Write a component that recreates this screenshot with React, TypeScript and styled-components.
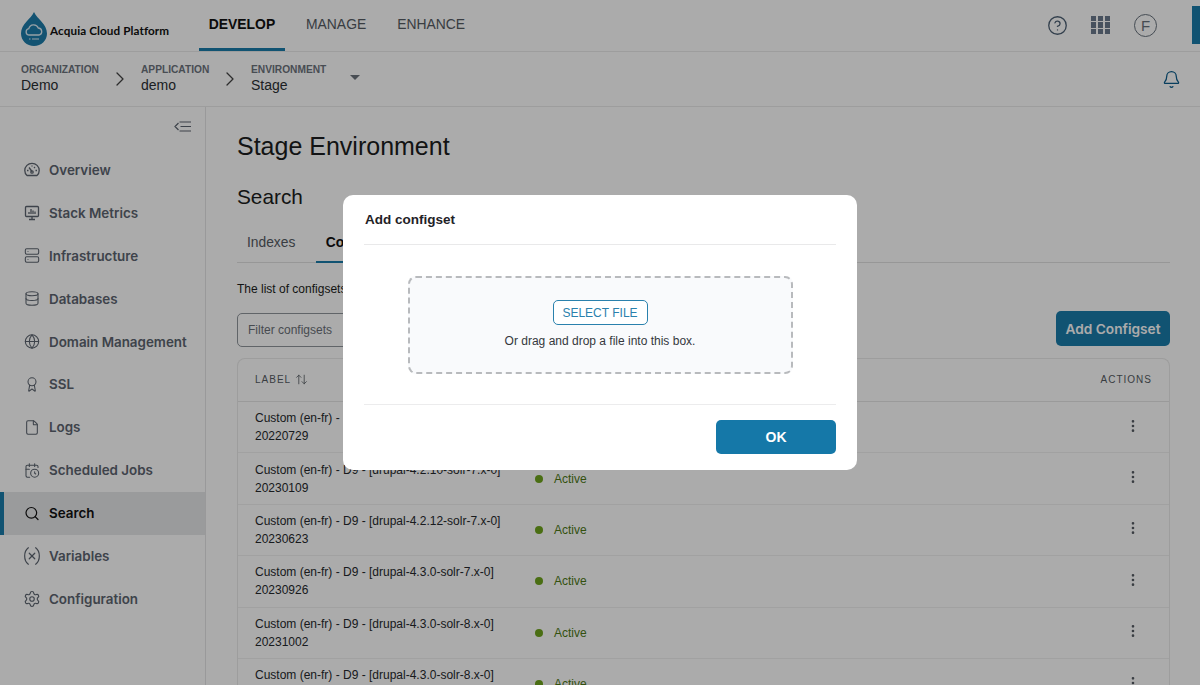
import React from "react";
import styled, { createGlobalStyle } from "styled-components";
import { Database, Globe, Award, File, CalendarClock, Search, Variable, Settings, Server, Bell, ChevronRight, CircleHelp, ArrowUpDown, EllipsisVertical } from "lucide-react";

const Global = createGlobalStyle`
  html, body { margin: 0; padding: 0; height: 685px; overflow: hidden; background: #fff; font-family: "Liberation Sans", Arial, sans-serif; }
  * { box-sizing: border-box; }
`;
const Page = styled.div`position: relative; width: 1200px; height: 685px; overflow: hidden; display: flex; flex-direction: column; background: #fff;`;
const Overlay = styled.div`position: absolute; inset: 0; background: rgba(0,0,0,.33); display: block;`;
const TopBar = styled.header`height: 52px; flex: none; display: flex; align-items: stretch; border-bottom: 1px solid #ebebeb; position: relative;`;
const Logo = styled.div`width: 199px; flex: none; display: flex; align-items: center; padding-left: 20px; gap: 2px;`;
const LogoText = styled.span`font: 700 11.7px "Lato", sans-serif; color: #111; margin-top: 8px; letter-spacing: .1px;`;
const Tabs = styled.nav`display: flex; flex: 1;`;
const Tab = styled.div<{ $active?: boolean }>`
  height: 51px; flex: none; width: ${p => p.$active ? "86px" : "auto"}; padding: 16px ${p => p.$active ? "0" : "15.5px"} 0; margin-right: ${p => p.$active ? "5.5px" : "0"};
  display: flex; align-items: flex-start; justify-content: center; font: 400 13.9px "Liberation Sans", sans-serif; line-height: 17px;
  color: ${p => p.$active ? "#111" : "#555b63"};
  font-weight: ${p => p.$active ? 700 : 400};
  border-bottom: 3px solid ${p => p.$active ? "#1a7cab" : "transparent"};
`;
const TopIcons = styled.div`display: flex; align-items: center; gap: 0; height: 50px;`;
const HelpSlot = styled.div`width: 21px; height: 21px; margin-right: 23px; color: #4d6074; display: flex;`;
const Grid = styled.div`display: grid; grid-template-columns: repeat(3, 5.4px); grid-auto-rows: 5.4px; gap: 1.4px; margin-right: 24px;`;
const GridDot = styled.span`background: #6a7a8c;`;
const Avatar = styled.div`width: 23px; height: 23px; border-radius: 50%; border: 1.5px solid #68727d; color: #68727d; font: 400 15px "Liberation Sans", sans-serif; display: flex; align-items: center; justify-content: center; margin-right: 43px;`;
const Corner = styled.div`width: 8px; height: 38px; background: #1a7cab; position: absolute; right: 0; top: 6px;`;
const Crumbs = styled.div`height: 55px; flex: none; display: flex; align-items: center; border-bottom: 1px solid #ebebeb; padding: 0 19px 0 21px;`;
const Crumb = styled.div<{ $w: number }>`width: ${p => p.$w}px; flex: none; display: flex; flex-direction: column;`;
const CrumbLabel = styled.span`font: 700 10.2px "Liberation Sans", sans-serif; line-height: 12px; color: #6c737c; margin-bottom: 1px;`;
const CrumbValue = styled.span`font: 400 14px "Liberation Sans", sans-serif; line-height: 17px; color: #2b2f33;`;
const Sep = styled.div`width: 33px; flex: none; display: flex; color: #444; margin-top: -1px;`;
const Caret = styled.div`width: 0; height: 0; border-left: 5px solid transparent; border-right: 5px solid transparent; border-top: 5px solid #6c737c; margin-top: -3px;`;
const BellSlot = styled.div`margin-left: auto; color: #0c5d8c; display: flex;`;
const Body = styled.div`flex: 1; display: flex; min-height: 0;`;
const Sidebar = styled.aside`width: 206px; flex: none; border-right: 1px solid #e4e4e6; padding-top: 41.6px; position: relative;`;
const Collapse = styled.div`position: absolute; right: 14px; top: 14px; display: flex;`;
const NavItem = styled.div<{ $active?: boolean }>`
  height: 42.9px; display: flex; align-items: center; gap: 9px; padding-left: ${p => p.$active ? "20px" : "24px"};
  border-left: ${p => p.$active ? "4px solid #1a7cab" : "0"};
  background: ${p => p.$active ? "#e6e7e9" : "transparent"};
  color: ${p => p.$active ? "#111" : "#5d6570"};
  font: 600 13.4px "Inter", sans-serif;
`;
const NavIcon = styled.span`width: 16px; display: flex; justify-content: center; flex: none;`;
const Main = styled.main`flex: 1; padding: 24px 30px 0 31px; min-width: 0; overflow: hidden;`;
const H1 = styled.h1`margin: 0; font: 400 25px "Liberation Sans", sans-serif; line-height: 30px; color: #1b1d20;`;
const H2 = styled.h2`margin: 24px 0 0; font: 400 20.8px "Liberation Sans", sans-serif; line-height: 24px; color: #1b1d20;`;
const TabRow = styled.div`margin-top: 13px; height: 41px; display: flex; border-bottom: 1px solid #e1e1e1;`;
const SubTab = styled.div<{ $active?: boolean }>`
  height: 41px; padding: 12px 10px 0; margin-right: ${p => p.$active ? 0 : "10.5px"}; font: ${p => p.$active ? 700 : 400} 13.8px "Liberation Sans", sans-serif; line-height: 17px;
  color: ${p => p.$active ? "#111" : "#555b63"}; border-bottom: 2px solid ${p => p.$active ? "#1a7cab" : "transparent"};
  width: ${p => p.$active ? "120px" : "auto"};
`;
const Lead = styled.p`margin: 18px 0 0; font: 400 12px "Liberation Sans", sans-serif; line-height: 16px; color: #1b1d20;`;
const Tools = styled.div`margin-top: 16px; display: flex; justify-content: space-between; align-items: flex-start;`;
const Filter = styled.div`width: 260px; height: 34px; border: 1px solid #8f959c; border-radius: 5px; padding: 0 10px; display: flex; align-items: center; font: 400 12px "Liberation Sans", sans-serif; color: #6b7178;`;
const AddBtn = styled.div`width: 114px; height: 35px; margin-top: -2px; border-radius: 5px; background: #1a7cab; color: #fff; font: 600 13.7px "Inter", sans-serif; display: flex; align-items: center; justify-content: center;`;
const Table = styled.div`margin-top: 11px; border: 1px solid #eaeaea; border-radius: 8px 8px 0 0; border-bottom: 0;`;
const Head = styled.div`height: 43px; display: flex; align-items: center; padding: 0 17px 2px; border-bottom: 1px solid #e6e6e6; font: 400 10px "Liberation Sans", sans-serif; letter-spacing: 1px; color: #565c63; justify-content: space-between;`;
const HeadLabel = styled.span`display: flex; align-items: center; gap: 4px;`;
const Row = styled.div`height: 51.4px; display: flex; align-items: center; padding: 0 0 0 17px; border-bottom: 1px solid #f0f0f0;`;
const Label = styled.div`width: 280px; flex: none; font: 400 12px "Liberation Sans", sans-serif; line-height: 18px; color: #26292d;`;
const Status = styled.div`flex: 1; display: flex; align-items: center; gap: 11px; font: 400 12px "Liberation Sans", sans-serif; color: #4e7a16;`;
const Dot = styled.span`width: 8px; height: 8px; border-radius: 50%; background: #6fa51d;`;
const More = styled.div`width: 70px; flex: none; display: flex; justify-content: center; color: #555b63; padding: 0 3px 3px 0;`;
const Modal = styled.div`position: absolute; left: 343px; top: 195px; width: 514px; height: 275px; background: #fff; border-radius: 10px; padding: 0 21px; display: flex; flex-direction: column;`;
const MHead = styled.div`height: 50px; flex: none; border-bottom: 1px solid #e9e9ea; display: flex; align-items: flex-start; padding: 16px 0 0 1px; font: 700 13.5px "Liberation Sans", sans-serif; line-height: 17px; color: #1f2227;`;
const Drop = styled.div`margin: 31px auto 0; width: 385px; height: 98px; border: 2px dashed #b8babd; border-radius: 8px; background: #f9fafc; display: flex; flex-direction: column; align-items: center; padding-top: 22px;`;
const SelectBtn = styled.div`width: 95px; height: 25px; border: 1px solid #2a81ad; border-radius: 5px; color: #2a81ad; font: 400 12px "Liberation Sans", sans-serif; display: flex; align-items: center; justify-content: center; background: #fff;`;
const DropText = styled.div`margin-top: 9px; font: 400 12px "Liberation Sans", sans-serif; line-height: 15px; color: #35383d;`;
const MFoot = styled.div`margin-top: 30px; border-top: 1px solid #ececed; padding-top: 15px; display: flex; justify-content: flex-end;`;
const OkBtn = styled.div`width: 120px; height: 34px; background: #1578a8; color: #fff; border-radius: 5px; font: 700 14px "Liberation Sans", sans-serif; display: flex; align-items: center; justify-content: center;`;

const Drip = () => (
  <svg width="28" height="36" viewBox="0 0 28 36" style={{ marginTop: 6 }}>
    <path d="M14 1C17 8 27 13 27 22.500C27 29.500 21.200 35 14 35S1 29.500 1 22.500C1 13 11 8 14 1Z" fill="#1d7cab" />
    <path d="M8.500 24a3.300 3.300 0 0 1 .3-6.400 5 5 0 0 1 9.500-.6 3.600 3.600 0 0 1 1 7Z" fill="none" stroke="#dfeef6" strokeWidth="1.300" />
    <path d="M9 28h1.500M12 28h7" stroke="#dfeef6" strokeWidth="1.200" />
  </svg>
);
const Dial = () => (
  <svg width="16" height="16" viewBox="0 0 16 16" fill="none" stroke="currentColor" strokeWidth="1.300">
    <path d="M3 13.500C1.500 12.300.8 10.500.8 8.500a7.200 7.200 0 0 1 14.400 0c0 2-.7 3.800-2.200 5Z" strokeLinejoin="round" />
    <path d="M8 9.500L5 5.500M3 8.500H4.500M11.500 8.500H13M11 5L10 6M8 3.500V4.500" />
    <circle cx="8" cy="10" r="1.200" />
  </svg>
);
const Metrics = () => (
  <svg width="16" height="16" viewBox="0 0 16 16" fill="none" stroke="currentColor" strokeWidth="1.300">
    <rect x="1.500" y="1.500" width="13" height="10" rx="1" /><path d="M8 11.500V14.500M5 14.500H11" />
    <path d="M5 9V7M7 9V4M9 9V5.500M11 9V6.500" />
  </svg>
);
const Lines = () => (
  <svg width="17" height="11" viewBox="0 0 17 11" fill="none" stroke="#5d6570" strokeWidth="1.200">
    <path d="M4.500 2L1 5.500L4.500 9M5.500 1H17M6.500 5.500H17M5.500 10H17" />
  </svg>
);

const nav: [string, React.ReactNode][] = [
  ["Overview", <Dial />], ["Stack Metrics", <Metrics />], ["Infrastructure", <Server size={17} strokeWidth={1.6} />],
  ["Databases", <Database size={17} strokeWidth={1.6} />], ["Domain Management", <Globe size={17} strokeWidth={1.6} />], ["SSL", <Award size={17} strokeWidth={1.6} />],
  ["Logs", <File size={17} strokeWidth={1.6} />], ["Scheduled Jobs", <CalendarClock size={17} strokeWidth={1.6} />], ["Search", <Search size={17} strokeWidth={1.8} />],
  ["Variables", <Variable size={22} strokeWidth={1.3} style={{ flex: "none" }} />], ["Configuration", <Settings size={18} strokeWidth={1.5} style={{ flex: "none" }} />],
];
const rows = [
  ["Custom (en-fr) - D9 - [drupal-4.2.10-solr-7.x-0]", "20220729"],
  ["Custom (en-fr) - D9 - [drupal-4.2.10-solr-7.x-0]", "20230109"],
  ["Custom (en-fr) - D9 - [drupal-4.2.12-solr-7.x-0]", "20230623"],
  ["Custom (en-fr) - D9 - [drupal-4.3.0-solr-7.x-0]", "20230926"],
  ["Custom (en-fr) - D9 - [drupal-4.3.0-solr-8.x-0]", "20231002"],
  ["Custom (en-fr) - D9 - [drupal-4.3.0-solr-8.x-0]", "20231003"],
];

export default function App() {
  return (
    <Page>
      <Global />
      <TopBar>
        <Logo><Drip /><LogoText>Acquia Cloud Platform</LogoText></Logo>
        <Tabs>
          <Tab $active>DEVELOP</Tab><Tab>MANAGE</Tab><Tab>ENHANCE</Tab>
        </Tabs>
        <TopIcons>
          <HelpSlot><CircleHelp size={21} strokeWidth={1.5} /></HelpSlot>
          <Grid>{Array.from({ length: 9 }, (_, i) => <GridDot key={i} />)}</Grid>
          <Avatar>F</Avatar>
        </TopIcons>
        <Corner />
      </TopBar>
      <Crumbs>
        <Crumb $w={87}><CrumbLabel>ORGANIZATION</CrumbLabel><CrumbValue>Demo</CrumbValue></Crumb>
        <Sep><ChevronRight size={24} strokeWidth={1.3} /></Sep>
        <Crumb $w={77}><CrumbLabel>APPLICATION</CrumbLabel><CrumbValue>demo</CrumbValue></Crumb>
        <Sep><ChevronRight size={24} strokeWidth={1.3} /></Sep>
        <Crumb $w={99}><CrumbLabel>ENVIRONMENT</CrumbLabel><CrumbValue>Stage</CrumbValue></Crumb>
        <Caret />
        <BellSlot><Bell size={19} strokeWidth={1.6} /></BellSlot>
      </Crumbs>
      <Body>
        <Sidebar>
          <Collapse><Lines /></Collapse>
          {nav.map(([t, ic]) => <NavItem key={t} $active={t === "Search"}><NavIcon>{ic}</NavIcon>{t}</NavItem>)}
        </Sidebar>
        <Main>
          <H1>Stage Environment</H1>
          <H2>Search</H2>
          <TabRow><SubTab>Indexes</SubTab><SubTab $active>Configsets</SubTab></TabRow>
          <Lead>The list of configsets available for this environment.</Lead>
          <Tools><Filter>Filter configsets</Filter><AddBtn>Add Configset</AddBtn></Tools>
          <Table>
            <Head><HeadLabel>LABEL <ArrowUpDown size={13} strokeWidth={1.5} /></HeadLabel><span>ACTIONS</span></Head>
            {rows.map(r => (
              <Row key={r[1]}>
                <Label>{r[0]}<br />{r[1]}</Label>
                <Status><Dot />Active</Status>
                <More><EllipsisVertical size={16} /></More>
              </Row>
            ))}
          </Table>
        </Main>
      </Body>
      <Overlay />
      <Modal>
        <MHead>Add configset</MHead>
        <Drop>
          <SelectBtn>SELECT FILE</SelectBtn>
          <DropText>Or drag and drop a file into this box.</DropText>
        </Drop>
        <MFoot><OkBtn>OK</OkBtn></MFoot>
      </Modal>
    </Page>
  );
}
